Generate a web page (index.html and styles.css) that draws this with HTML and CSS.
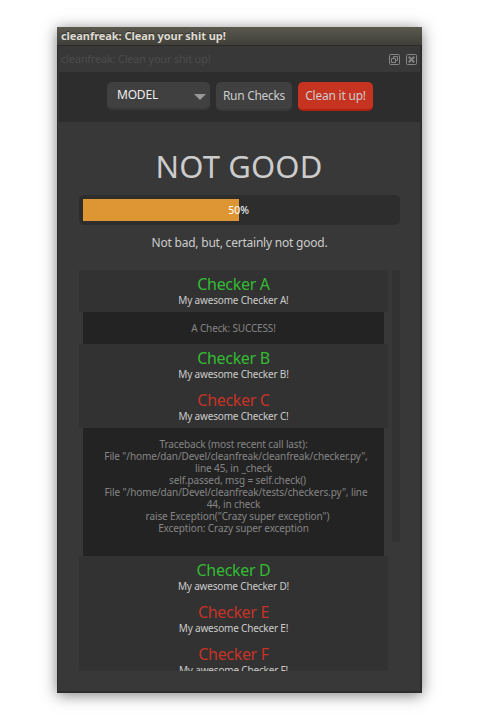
FILE: index.html
```html
<!DOCTYPE html>
<html lang="en">
<head>
<meta charset="utf-8">
<title>cleanfreak: Clean your shit up!</title>
<link rel="stylesheet" href="styles.css">
</head>
<body>
<main class="window">
  <header class="titlebar"><span>cleanfreak: Clean your shit up!</span></header>
  <div class="dockbar">
    <span class="dock-title">cleanfreak: Clean your shit up!</span>
    <svg class="dock-icon" width="11" height="11" viewBox="0 0 11 11"><rect x=".5" y=".5" width="10" height="10" rx="1"/><path d="M4.5 4.5V2.5h4v4h-2M2.5 4.5h4v4h-4z"/></svg>
    <svg class="dock-icon" width="11" height="11" viewBox="0 0 11 11"><rect x=".5" y=".5" width="10" height="10" rx="1"/><path class="cross" d="M2.8 2.8l5.4 5.4M8.2 2.8L2.8 8.2"/></svg>
  </div>
  <nav class="toolbar">
    <div class="button select"><span>MODEL</span><i class="arrow"></i></div>
    <div class="button run"><span>Run Checks</span></div>
    <div class="button clean"><span>Clean it up!</span></div>
  </nav>
  <section class="content">
    <h1>NOT GOOD</h1>
    <div class="progress"><div class="fill" style="width:156px"></div><span class="percent">50%</span></div>
    <p class="summary">Not bad, but, certainly not good.</p>
    <div class="results">
      <div class="list">
        <article class="checker pass"><h2>Checker A</h2><p>My awesome Checker A!</p></article>
        <div class="message short"><p>A Check: SUCCESS!</p></div>
        <article class="checker pass"><h2>Checker B</h2><p>My awesome Checker B!</p></article>
        <article class="checker fail"><h2>Checker C</h2><p>My awesome Checker C!</p></article>
        <div class="message trace">
          <p>Traceback (most recent call last):</p>
          <p class="frame">File "/home/dan/Devel/cleanfreak/cleanfreak/checker.py",</p>
          <p>line 45, in _check</p>
          <p class="source">self.passed, msg = self.check()</p>
          <p class="frame">File "/home/dan/Devel/cleanfreak/tests/checkers.py", line</p>
          <p>44, in check</p>
          <p class="source">raise Exception("Crazy super exception")</p>
          <p>Exception: Crazy super exception</p>
        </div>
        <article class="checker pass"><h2>Checker D</h2><p>My awesome Checker D!</p></article>
        <article class="checker fail"><h2>Checker E</h2><p>My awesome Checker E!</p></article>
        <article class="checker fail"><h2>Checker F</h2><p>My awesome Checker F!</p></article>
      </div>
      <div class="scrollbar"></div>
    </div>
  </section>
</main>
</body>
</html>
```
FILE: styles.css
```css
* { box-sizing: border-box; }
html, body { margin: 0; height: 720px; overflow: hidden; background: #fff; }
body { padding: 27px 0 0 57px; font-family: "Noto Sans", "Open Sans", sans-serif; color: #ccc; }
h1, h2, p { margin: 0; font-weight: 400; white-space: nowrap; }
.window { width: 365px; height: 666px; background: #383838; border: solid #2d2d2d; border-width: 0 2px 2px 1px; box-shadow: 0 2px 14px rgba(0,0,0,.5); }
.titlebar { height: 19px; margin: 0 -2px 0 -1px; padding-left: 4px; background: linear-gradient(#5b594f, #403f39); border-bottom: 1px solid #2b2b28; font-size: 11px; font-weight: 700; line-height: 18px; color: #dfdbd2; letter-spacing: -.06px; white-space: nowrap; text-shadow: 0 -1px #33322e; }
.dockbar { height: 26px; display: flex; align-items: center; padding: 0 3px 0 3px; gap: 6px; }
.dock-title { flex: 1; font-size: 11px; line-height: 26px; color: #4c4c4c; letter-spacing: -.21px; }
.dock-icon { fill: none; stroke: #858585; stroke-width: 1; }
.dock-icon .cross { stroke-width: 2; }
.toolbar { height: 50px; margin-left: 1px; padding: 10px 0 0 48px; background: #2d2d2d; display: flex; align-items: flex-start; gap: 6px; }
.button { height: 29px; background: #404040; border-bottom: 2px solid #383838; border-radius: 5px; text-align: center; font-size: 12px; line-height: 27px; white-space: nowrap; }
.select { width: 103px; height: 28px; padding: 0 4px 0 10px; display: flex; justify-content: space-between; align-items: center; color: #eee; line-height: 26px; letter-spacing: -.2px; }
.arrow { border: solid transparent; border-width: 6px 6px 0; border-top-color: #999; margin-top: 4px; }
.run { width: 76px; letter-spacing: -.3px; }
.clean { width: 75px; background: #c63321; border-color: #b02110; letter-spacing: -.22px; }
.content { padding: 23px 19px 0 21px; }
h1 { height: 50px; padding-right: 2px; font-size: 31px; line-height: 42px; text-align: center; letter-spacing: .15px; }
.progress { position: relative; width: 321px; height: 30px; padding: 4px; background: #2d2d2d; border-radius: 5px; }
.fill { height: 22px; background: #dd9633; }
.percent { position: absolute; inset: 0 2px 0 0; text-align: center; font-size: 10.5px; line-height: 30px; color: #fff; }
.summary { height: 45px; padding-right: 1px; text-align: center; font-size: 12px; line-height: 35px; letter-spacing: -.22px; }
.results { display: flex; gap: 4px; align-items: flex-start; }
.list { width: 309px; height: 401px; overflow: hidden; }
.checker { height: 42px; padding-top: 3px; background: #323232; text-align: center; }
.checker h2 { font-size: 16px; line-height: 22px; letter-spacing: -.32px; }
.checker p { margin-top: -1px; font-size: 10px; line-height: 12px; letter-spacing: -.18px; }
.pass h2 { color: #33bb33; }
.fail h2 { color: #c63326; }
.message { margin: 0 4px; background: #232323; color: #858585; text-align: center; font-size: 10px; line-height: 12px; letter-spacing: -.11px; }
.short { height: 32px; padding-top: 10px; letter-spacing: -.15px; }
.trace { height: 128px; padding-top: 10px; }
.frame { padding-left: 5px; }
.source { padding-left: 8px; }
.scrollbar { width: 8px; height: 272px; background: #323232; }
```
